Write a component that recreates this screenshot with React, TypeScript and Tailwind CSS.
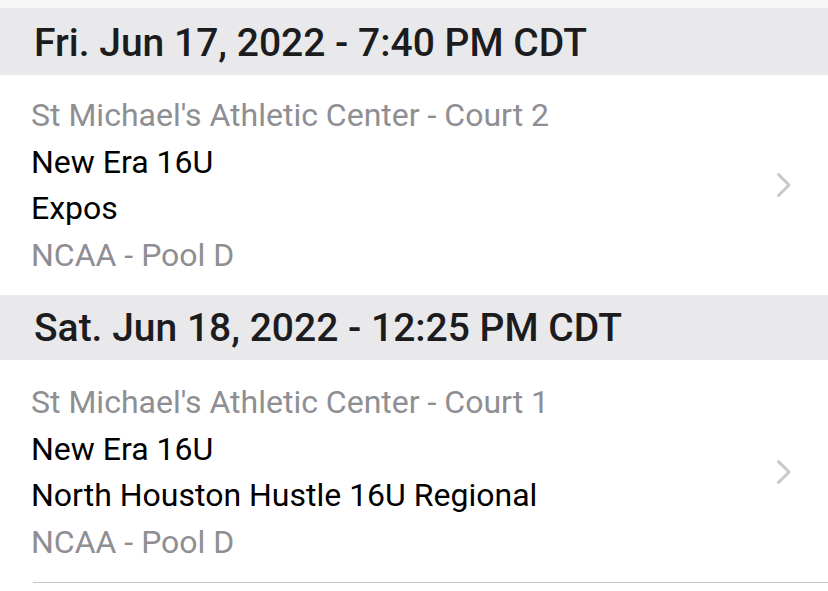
const games = [
  {
    when: 'Fri. Jun 17, 2022 - 7:40 PM CDT',
    venue: "St Michael's Athletic Center - Court 2",
    home: 'New Era 16U',
    away: 'Expos',
    pool: 'NCAA - Pool D',
  },
  {
    when: 'Sat. Jun 18, 2022 - 12:25 PM CDT',
    venue: "St Michael's Athletic Center - Court 1",
    home: 'New Era 16U',
    away: 'North Houston Hustle 16U Regional',
    pool: 'NCAA - Pool D',
  },
];

function Chevron() {
  return (
    <svg width="16" height="26" viewBox="0 0 16 26" fill="none" className="shrink-0">
      <path d="M2.5 2.5 L13 13 L2.5 23.5" stroke="#c7c7cc" strokeWidth="3" strokeLinecap="round" strokeLinejoin="round" />
    </svg>
  );
}

export default function App() {
  return (
    <div className="w-[828px] h-[591px] overflow-hidden bg-white" style={{ fontFamily: 'Roboto, "Liberation Sans", sans-serif' }}>
      <div className="h-[8px] bg-[#f7f7f7]" />
      {games.map((g, i) => (
        <div key={i}>
          <div className={`${i === 0 ? 'h-[67px] pt-[4px]' : 'h-[65px] pt-[2px]'} bg-[#e9e9eb] px-[34px] flex items-center`}>
            <span className="text-[39px] font-medium text-[#1c1c1e] leading-none">{g.when}</span>
          </div>
          <div className={`flex items-center pl-[31px] pr-[36px] pb-[17px] ${i === 0 ? 'pt-[17px]' : 'pt-[19px]'}`}>
            <div className="flex-1 text-[32px] leading-[46.5px]">
              <div className="text-[#8e8e93]">{g.venue}</div>
              <div className="text-black">{g.home}</div>
              <div className="text-black">{g.away}</div>
              <div className="text-[#8e8e93]">{g.pool}</div>
            </div>
            <Chevron />
          </div>
        </div>
      ))}
      <div className="ml-[33px] h-px bg-[#c8c7cc]" />
    </div>
  );
}
